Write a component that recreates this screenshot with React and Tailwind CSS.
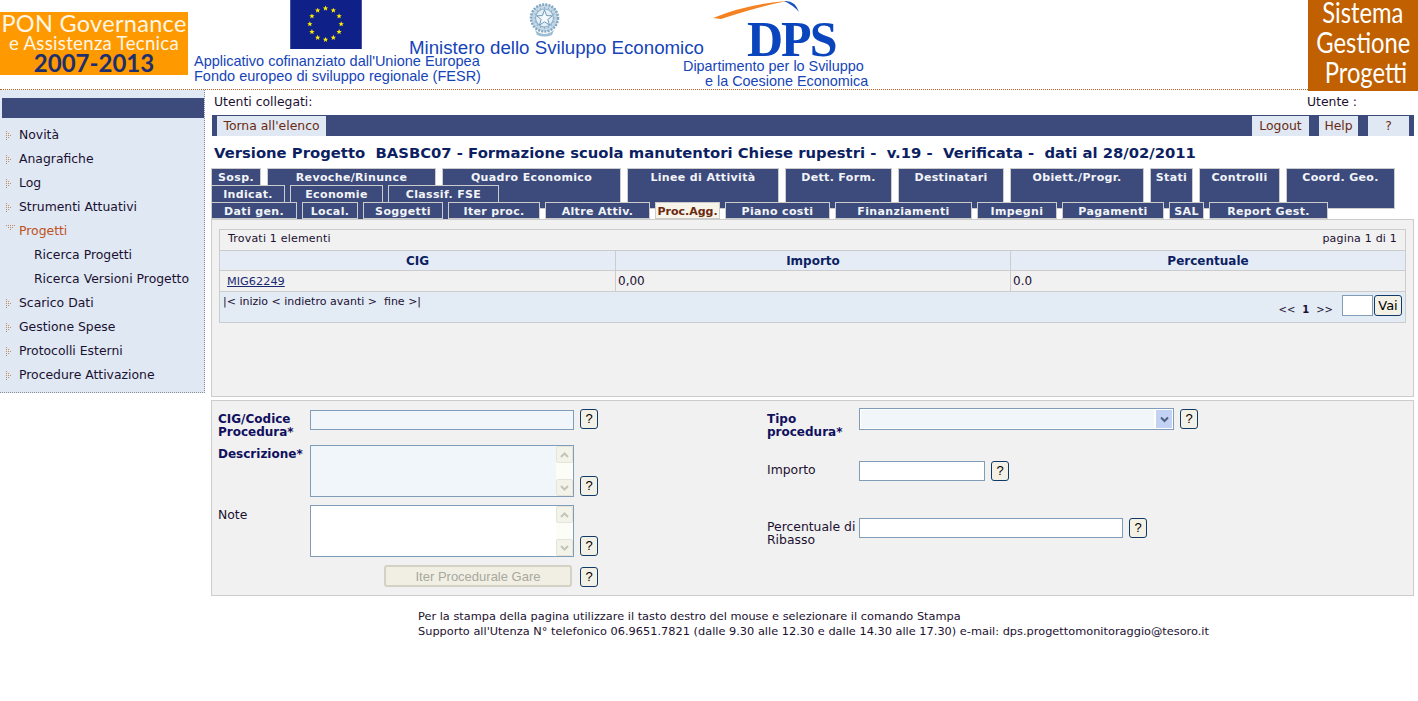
const NAVY = "bg-[#3c4a7c]";
const row1 = [
  ["Sosp.", "w-[50px]"], ["Revoche/Rinunce", "w-[169px]"], ["Quadro Economico", "w-[179px]"], ["Linee di Attività", "w-[152px]"],
  ["Dett. Form.", "w-[107px]"], ["Destinatari", "w-[106px]"], ["Obiett./Progr.", "w-[134px]"], ["Stati", "w-[43px]"],
  ["Controlli", "w-[81px]"], ["Coord. Geo.", "w-[109px]"],
];
const row2 = [["Indicat.", "w-[74px]"], ["Economie", "w-[93px]"], ["Classif. FSE", "w-[111px]"]];
const row3 = [
  ["Dati gen.", "w-[86px]"], ["Local.", "w-[56px]"], ["Soggetti", "w-[80px]"], ["Iter proc.", "w-[92px]"], ["Altre Attiv.", "w-[105px]"],
  ["Proc.Agg.", "w-[65px]", true], ["Piano costi", "w-[105px]"], ["Finanziamenti", "w-[137px]"], ["Impegni", "w-[80px]"],
  ["Pagamenti", "w-[102px]"], ["SAL", "w-[35px]"], ["Report Gest.", "w-[119px]"],
];
const menuTop = ["Novità", "Anagrafiche", "Log", "Strumenti Attuativi"];
const menuBottom = ["Scarico Dati", "Gestione Spese", "Protocolli Esterni", "Procedure Attivazione"];

function Tab({ label, w, active, tall }) {
  const base = "relative shrink-0 border border-[#cccccc] pt-[2px] text-center text-[11px] font-bold leading-[14px] whitespace-nowrap";
  const tone = active ? "bg-[#f7f5ea] text-[#6b2a10]" : `${NAVY} text-[#f2f4f8] tracking-[0.35px]`;
  return <div className={`${base} ${tone} ${w} ${tall ? "h-[41px]" : "h-[17px]"}`}>{label}</div>;
}

function TabRow({ items, gap, tall }) {
  return (
    <div className={`flex h-[17px] ${gap}`}>
      {items.map(([l, w, a]) => <Tab key={l} label={l} w={w} active={a} tall={tall} />)}
    </div>
  );
}

function Arrow() {
  const dots = [[0,0],[0,2],[0,4],[0,6],[0,8],[2,2],[2,4],[2,6],[4,4]];
  return (
    <svg width="7" height="9" viewBox="0 0 7 9" className="shrink-0">
      {dots.map(([x, y]) => <rect key={`${x}-${y}`} x={x} y={y} width="1" height="1" fill="#c08a60" />)}
    </svg>
  );
}

function ArrowDown() {
  const dots = [[0,0],[2,0],[4,0],[6,0],[8,0],[2,2],[4,2],[6,2],[4,4]];
  return (
    <svg width="9" height="7" viewBox="0 0 9 7" className="shrink-0">
      {dots.map(([x, y]) => <rect key={`${x}-${y}`} x={x} y={y} width="1" height="1" fill="#c08a60" />)}
    </svg>
  );
}

function MenuItem({ label }) {
  return (
    <div className="flex h-6 items-center pl-[6px] text-[#1b1030]">
      <Arrow />
      <span className="ml-[6px]">{label}</span>
    </div>
  );
}

function Help({ className = "" }) {
  return (
    <button className={`flex h-5 w-[18px] shrink-0 items-center justify-center rounded-[3px] border border-[#123a68] bg-[#f3f1e6] font-['Liberation_Sans',sans-serif] text-[13px] text-black ${className}`}>?</button>
  );
}

function Scroll() {
  const btn = "flex h-[17px] items-center justify-center rounded-[2px] border border-[#e4e4da] bg-[#f4f3ea]";
  return (
    <div className="flex w-[17px] shrink-0 flex-col justify-between bg-[#fdfdf8]">
      <div className={btn}><svg width="9" height="6" viewBox="0 0 9 6"><path d="M1 5 L4.5 1.5 L8 5" fill="none" stroke="#c3c5bc" strokeWidth="2" /></svg></div>
      <div className={btn}><svg width="9" height="6" viewBox="0 0 9 6"><path d="M1 1 L4.5 4.5 L8 1" fill="none" stroke="#c3c5bc" strokeWidth="2" /></svg></div>
    </div>
  );
}

function Area({ bg }) {
  return (
    <div className={`flex h-[52px] w-[264px] shrink-0 border border-[#7f9db9] ${bg}`}>
      <div className="flex-1" />
      <Scroll />
    </div>
  );
}

function Emblem() {
  const spokes = Array.from({ length: 16 }, (_, i) => i * 22.5);
  return (
    <svg width="31" height="36" viewBox="0 0 31 36">
      <circle cx="15.5" cy="16" r="13.5" fill="#c6d8e6" stroke="#7fa6c4" strokeWidth="2.5" strokeDasharray="2 1.2" />
      <circle cx="15.5" cy="16" r="9" fill="#e6eff5" stroke="#8fb2cc" strokeWidth="1.2" />
      {spokes.map((a) => <line key={a} x1="15.5" y1="5" x2="15.5" y2="7.5" stroke="#8fb2cc" transform={`rotate(${a} 15.5 16)`} />)}
      <path d="M15.5 8 L17.6 13.6 L23.5 13.8 L18.8 17.4 L20.5 23 L15.5 19.8 L10.5 23 L12.2 17.4 L7.5 13.8 L13.4 13.6 Z" fill="#f6fafc" stroke="#6f9abb" strokeWidth="1" />
      <path d="M6 28 Q15.5 36 25 28 L23 33 Q15.5 36 8 33 Z" fill="#9dbdd4" />
    </svg>
  );
}

function Flag() {
  const stars = Array.from({ length: 12 }, (_, i) => {
    const a = (i * 30 * Math.PI) / 180;
    return [36 + 16 * Math.sin(a), 24.5 - 16 * Math.cos(a)];
  });
  return (
    <svg width="72" height="49" viewBox="0 0 73 50" className="ml-[96px] block">
      <rect width="73" height="50" fill="#0f2088" />
      {stars.map(([x, y], i) => (
        <path key={i} transform={`translate(${x} ${y})`} d="M0 -2.8 L0.8 -0.9 L2.7 -0.9 L1.2 0.4 L1.7 2.4 L0 1.2 L-1.7 2.4 L-1.2 0.4 L-2.7 -0.9 L-0.8 -0.9 Z" fill="#ffee00" />
      ))}
    </svg>
  );
}

function Swoosh() {
  return (
    <svg width="90" height="20" viewBox="0 0 90 20" className="block">
      <path d="M0 18 Q34 4 74 1 Q48 6 8 19 Z" fill="#f58220" />
      <path d="M71 1 Q82 0 86 12 Q80 5 71 1 Z" fill="#1a4fc0" />
    </svg>
  );
}

export default function App() {
  return (
    <div className="min-h-[701px] w-[1418px] overflow-hidden bg-white font-['DejaVu_Sans',sans-serif] text-[12px]">
      {/* Header */}
      <header className="relative flex h-[90px] border-b border-dotted border-[#b5622c]">
        <div className="mt-3 flex h-[63px] w-[188px] shrink-0 flex-col items-center bg-[#fe9900] font-['Lato',sans-serif] text-[#fff6e6]">
          <div className="text-[23.5px] leading-[22px] whitespace-nowrap tracking-[0.3px]">PON Governance</div>
          <div className="text-[18.6px] leading-[18px] whitespace-nowrap tracking-[0.3px]">e Assistenza Tecnica</div>
          <div className="text-[24px] font-bold leading-[21px] text-[#1d2f6f]">2007-2013</div>
        </div>
        <div className="ml-[6px] w-[215px] shrink-0 font-['Liberation_Sans',sans-serif] text-[14.5px] leading-[15px] text-[#1544b8] whitespace-nowrap">
          <Flag />
          <div className="mt-[5px]">Applicativo cofinanziato dall'Unione Europea</div>
          <div>Fondo europeo di sviluppo regionale (FESR)</div>
        </div>
        <div className="flex w-[274px] shrink-0 flex-col font-['Liberation_Sans',sans-serif] text-[18.7px] leading-[18px] text-[#1544b8] whitespace-nowrap">
          <div className="ml-[120px] mt-[2px] h-[36px]"><Emblem /></div>
          <div className="pt-px">Ministero dello Sviluppo Economico</div>
        </div>
        <div className="w-[185px] shrink-0 font-['Liberation_Sans',sans-serif] text-[14.4px] leading-[15px] text-[#1544b8] whitespace-nowrap">
          <div className="ml-[30px]"><Swoosh /></div>
          <div className="ml-[64px] h-[38px] font-['Liberation_Serif',serif] text-[50px] font-bold leading-[38px] tracking-[-2px] text-[#0b45bd]">DPS</div>
          <div className="pt-px">Dipartimento per lo Sviluppo</div>
          <div className="pl-[22px]">e la Coesione Economica</div>
        </div>
        <div className="absolute right-0 top-0 flex h-[91px] w-[110px] flex-col items-center overflow-hidden bg-[#c06000] font-['Lato',sans-serif] text-[28px] leading-[30px] text-white">
          <div className="-mt-[3px] scale-x-[0.85] whitespace-nowrap">Sistema</div>
          <div className="scale-x-[0.85] whitespace-nowrap">Gestione</div>
          <div className="scale-x-[0.85] whitespace-nowrap pl-2">Progetti</div>
        </div>
      </header>

      <div className="flex">
        {/* Sidebar */}
        <aside className="h-[303px] w-[205px] shrink-0 border-r border-b border-dotted border-[#8a8f99] bg-[#dfe8f3] pt-2 text-[12.4px]">
          <div className={`ml-[2px] h-5 ${NAVY}`} />
          <nav className="mt-[5px]">
            {menuTop.map((m) => <MenuItem key={m} label={m} />)}
            <div className="flex h-6 items-center pl-[6px] text-[#c0501c]">
              <span className="-mt-[6px]"><ArrowDown /></span>
              <span className="ml-[4px]">Progetti</span>
            </div>
            <div className="flex h-6 items-center pl-[34px] text-[#1b1030]">Ricerca Progetti</div>
            <div className="flex h-6 items-center pl-[34px] text-[#1b1030]">Ricerca Versioni Progetto</div>
            {menuBottom.map((m) => <MenuItem key={m} label={m} />)}
          </nav>
        </aside>

        {/* Main */}
        <main className="ml-[6px] w-[1203px] shrink-0">
          <div className="flex h-[25px] items-center justify-between pb-[1px] pl-[3px] pr-[57px] text-[12.4px] text-[#1b1030]">
            <span>Utenti collegati:</span>
            <span>Utente :</span>
          </div>
          <div className={`ml-px flex h-[21px] items-end justify-between pl-[5px] pr-[5px] text-[12.4px] text-[#6b2a10] ${NAVY}`}>
            <div className="flex h-5 w-[109px] items-center justify-center bg-[#dfe8f3]">Torna all'elenco</div>
            <div className="flex gap-[10px]">
              <div className="flex h-5 w-[57px] items-center justify-center bg-[#dfe8f3]">Logout</div>
              <div className="flex h-5 w-[39px] items-center justify-center bg-[#dfe8f3]">Help</div>
              <div className="flex h-5 w-[41px] items-center justify-center bg-[#dfe8f3]">?</div>
            </div>
          </div>
          <h1 className="flex h-8 items-center whitespace-pre pl-[3px] pt-[2px] text-[14.82px] font-bold text-[#0d1f63]">Versione Progetto  BASBC07 - Formazione scuola manutentori Chiese rupestri -  v.19 -  Verificata -  dati al 28/02/2011</h1>

          <div className="h-[51px]">
            <TabRow items={row1} gap="gap-[6px]" tall />
            <TabRow items={row2} gap="gap-[5px]" tall />
            <TabRow items={row3} gap="gap-[5px]" />
          </div>

          {/* Results panel */}
          <section className="relative z-10 h-[178px] border border-[#cccccc] bg-[#f1f1f1] pl-[7px] pr-[7px] pt-[9px]">
            <div className="border border-[#cccccc] text-[11px] text-[#1b1030]">
              <div className="flex h-[21px] items-center justify-between border-b border-[#cccccc] px-2 pb-[1px] tracking-[0.2px]">
                <span>Trovati 1 elementi</span>
                <span>pagina 1 di 1</span>
              </div>
              <div className="grid h-5 grid-cols-[396px_395px_1fr] border-b border-[#cccccc] bg-[#e5ecf6] text-center text-[12px] font-bold text-[#0d1f63]">
                <div className="border-r border-[#cccccc] leading-[21px]">CIG</div>
                <div className="border-r border-[#cccccc] leading-[21px]">Importo</div>
                <div className="leading-[21px]">Percentuale</div>
              </div>
              <div className="grid h-[21px] grid-cols-[396px_395px_1fr] border-b border-[#cccccc] text-[12px]">
                <div className="border-r border-[#cccccc] pl-[7px] text-[11.3px] leading-[21px] text-[#1a2a70] underline">MIG62249</div>
                <div className="border-r border-[#cccccc] pl-[2px] leading-[21px]">0,00</div>
                <div className="pl-[2px] leading-[21px]">0.0</div>
              </div>
              <div className="flex h-[30px] justify-between bg-[#e3ebf5] pl-[3px] pr-[3px]">
                <span className="pt-[2px] whitespace-pre">|&lt; inizio &lt; indietro avanti &gt;  fine &gt;|</span>
                <div className="flex pt-[3px]">
                  <div className="mr-[9px] flex items-end gap-[7px] pb-[7px] text-[10px] leading-none">
                    <span>&lt;&lt;</span><b>1</b><span>&gt;&gt;</span>
                  </div>
                  <input className="h-[21px] w-[31px] border border-[#7f9db9] bg-white" />
                  <button className="ml-px h-[21px] w-[28px] rounded-[3px] border border-[#123a68] bg-[#f3f1e6] font-['DejaVu_Sans',sans-serif] text-[13px] text-black">Vai</button>
                </div>
              </div>
            </div>
          </section>

          {/* Form panel */}
          <section className="mt-[3px] flex h-[196px] border border-[#cccccc] bg-[#f1f1f1] pl-[6px] text-[12.4px] text-[#1b1030]">
            <div className="w-[549px] shrink-0 pt-2">
              <div className="flex h-9">
                <label className="w-[92px] shrink-0 pt-[4px] text-[12px] font-bold leading-[13px] text-[#10105e]">CIG/Codice Procedura*</label>
                <input className="mt-px h-5 w-[264px] shrink-0 border border-[#7f9db9] bg-[#f1f6fb]" />
                <Help className="ml-[6px]" />
              </div>
              <div className="flex h-[60px]">
                <label className="w-[92px] shrink-0 pt-px text-[12px] font-bold leading-[16px] text-[#10105e]">Descrizione*</label>
                <Area bg="bg-[#f1f6fb]" />
                <Help className="ml-[6px] mt-[31px]" />
              </div>
              <div className="flex h-[60px]">
                <label className="w-[92px] shrink-0 pt-[2px] leading-[16px]">Note</label>
                <Area bg="bg-white" />
                <Help className="ml-[6px] mt-[31px]" />
              </div>
              <div className="flex h-[22px] items-end">
                <button className="ml-[166px] h-[22px] w-[188px] rounded-[3px] border-2 border-[#d4d2c4] bg-[#f1efe4] pb-[2px] font-['Liberation_Sans',sans-serif] text-[13px] text-[#a8a89e]">Iter Procedurale Gare</button>
                <Help className="ml-2" />
              </div>
            </div>
            <div className="flex-1 pt-[7px]">
              <div className="flex h-[53px]">
                <label className="w-[92px] shrink-0 pt-[5px] text-[12px] font-bold leading-[13px] text-[#10105e]">Tipo procedura*</label>
                <div className="flex h-[22px] w-[315px] shrink-0 items-stretch border border-[#7f9db9] bg-white p-px">
                  <div className="flex-1 bg-[#f1f6fb]" />
                  <div className="ml-[2px] flex w-[16px] items-center justify-center bg-[#c3d2f3]">
                    <svg width="9" height="7" viewBox="0 0 9 7"><path d="M1 1.5 L4.5 5 L8 1.5" fill="none" stroke="#4d6185" strokeWidth="2" /></svg>
                  </div>
                </div>
                <Help className="ml-[6px] mt-px" />
              </div>
              <div className="flex h-[57px]">
                <label className="w-[92px] shrink-0 pt-px leading-[16px]">Importo</label>
                <input className="h-5 w-[126px] shrink-0 border border-[#7f9db9] bg-white" />
                <Help className="ml-[6px]" />
              </div>
              <div className="flex">
                <label className="w-[92px] shrink-0 whitespace-pre-line pt-[2px] leading-[13px]">{"Percentuale di\nRibasso"}</label>
                <input className="h-5 w-[264px] shrink-0 border border-[#7f9db9] bg-white" />
                <Help className="ml-[6px]" />
              </div>
            </div>
          </section>

          <footer className="ml-[207px] mt-[13px] text-[11.35px] leading-[15px] text-[#1b1030] whitespace-nowrap">
            <div>Per la stampa della pagina utilizzare il tasto destro del mouse e selezionare il comando Stampa</div>
            <div>Supporto all'Utenza N° telefonico 06.9651.7821 (dalle 9.30 alle 12.30 e dalle 14.30 alle 17.30) e-mail: dps.progettomonitoraggio@tesoro.it</div>
          </footer>
        </main>
      </div>
    </div>
  );
}
